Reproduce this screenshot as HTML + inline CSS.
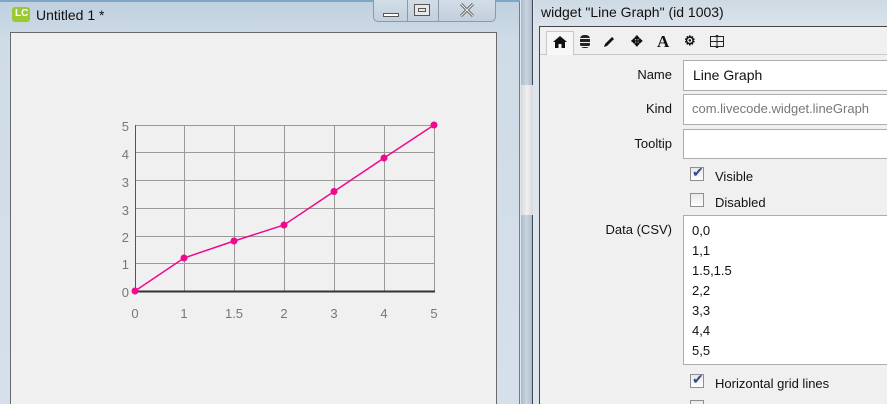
<!DOCTYPE html>
<html><head><meta charset="utf-8"><style>
*{box-sizing:border-box;margin:0;padding:0}
html,body{width:887px;height:404px;overflow:hidden}
body{position:relative;background:#dfe7ee;font-family:"Liberation Sans",sans-serif;font-size:13px;color:#111}
.abs{position:absolute}
.lbl{position:absolute;right:215px;text-align:right;font-size:13px;color:#111}
.box{position:absolute;left:683px;width:210px;background:#fff;border:1px solid #adadad}
.cb{position:absolute;left:690px;width:14px;height:14px;border:1px solid #8f8f8f;background:linear-gradient(#e8e8e8,#fff)}
.cbt{position:absolute;left:715px;font-size:13px}
</style></head><body>
<div class="abs" style="left:0;top:0;width:520px;height:404px;background:linear-gradient(#bfd0df,#cfdbe6 40px,#d6e0ea);border-right:1px solid #6d7d8a"></div>
<div class="abs" style="left:0;top:0;width:520px;height:2px;background:#7fa6c6"></div>
<div class="abs" style="left:12px;top:7px;width:18px;height:15px;background:#9cc92f;border-radius:3px"></div>
<div class="abs" style="left:15px;top:8px;color:#fff;font-size:10px;font-weight:bold">LC</div>
<div class="abs" style="left:36px;top:7px;font-size:14px;color:#111">Untitled 1 *</div>
<div class="abs" style="left:373px;top:0;width:123px;height:22px;border:1px solid #8a9aa8;border-top:none;border-radius:0 0 5px 5px;background:linear-gradient(#d2dde7,#c2d0dc)"></div>
<div class="abs" style="left:407px;top:0;width:1px;height:22px;background:#8a9aa8"></div>
<div class="abs" style="left:438px;top:0;width:1px;height:22px;background:#8a9aa8"></div>
<div class="abs" style="left:383px;top:13px;width:16px;height:4px;border:1px solid #555;background:#fff"></div>
<div class="abs" style="left:414px;top:4px;width:16px;height:12px;border:1px solid #555;background:#e8e8e8"></div>
<div class="abs" style="left:418px;top:8px;width:8px;height:4px;border:1px solid #555"></div>
<svg class="abs" style="left:459px;top:3px" width="16" height="14"><path d="M2 1 L14 13 M14 1 L2 13" stroke="#666" stroke-width="3"/><path d="M2 1 L14 13 M14 1 L2 13" stroke="#eee" stroke-width="1"/></svg>
<div class="abs" style="left:10px;top:32px;width:487px;height:380px;background:#f0f0f0;border:1px solid #6a6a6a"></div>
<svg class="abs" style="left:0;top:0" width="520" height="404">
<g stroke="#9a9a9a" stroke-width="1">
<line x1="135" y1="125.5" x2="434" y2="125.5"/><line x1="135" y1="152.5" x2="434" y2="152.5"/><line x1="135" y1="180.5" x2="434" y2="180.5"/><line x1="135" y1="208.5" x2="434" y2="208.5"/><line x1="135" y1="236.5" x2="434" y2="236.5"/><line x1="135" y1="263.5" x2="434" y2="263.5"/>
<line x1="184.5" y1="125" x2="184.5" y2="291"/><line x1="234.5" y1="125" x2="234.5" y2="291"/><line x1="284.5" y1="125" x2="284.5" y2="291"/><line x1="334.5" y1="125" x2="334.5" y2="291"/><line x1="384.5" y1="125" x2="384.5" y2="291"/><line x1="434.5" y1="125" x2="434.5" y2="291"/>
</g>
<line x1="135.5" y1="125" x2="135.5" y2="292" stroke="#555"/>
<line x1="134" y1="291.5" x2="435" y2="291.5" stroke="#333" stroke-width="2"/>
<polyline fill="none" stroke="#f0088f" stroke-width="1.5" points="135,291 184,258 234,241 284,225 334,191.5 384,158 434,125"/>
<g fill="#f0088f"><circle cx="135" cy="291" r="3.5"/><circle cx="184" cy="258" r="3.5"/><circle cx="234" cy="241" r="3.5"/><circle cx="284" cy="225" r="3.5"/><circle cx="334" cy="191.5" r="3.5"/><circle cx="384" cy="158" r="3.5"/><circle cx="434" cy="125" r="3.5"/></g>
<g font-family="Liberation Sans" font-size="13" fill="#777" text-anchor="end">
<text x="129" y="131">5</text><text x="129" y="159">4</text><text x="129" y="187">3</text><text x="129" y="215">3</text><text x="129" y="242">2</text><text x="129" y="269">1</text><text x="129" y="297">0</text></g>
<g font-family="Liberation Sans" font-size="13" fill="#777" text-anchor="middle">
<text x="135" y="318">0</text><text x="184" y="318">1</text><text x="234" y="318">1.5</text><text x="284" y="318">2</text><text x="334" y="318">3</text><text x="384" y="318">4</text><text x="434" y="318">5</text></g>
</svg>
<div class="abs" style="left:521px;top:0;width:12px;height:404px;background:linear-gradient(90deg,#a9bccb,#c9d6e0,#a9bccb);border-right:1px solid #445"></div>
<div class="abs" style="left:521px;top:85px;width:12px;height:130px;background:linear-gradient(90deg,#d8d8d8,#f0f0f0,#d8d8d8)"></div>
<div class="abs" style="left:534px;top:0;width:353px;height:404px;background:linear-gradient(#cdd9e3,#dde5ec 30px)"></div>
<div class="abs" style="left:541px;top:4px;font-size:14px;color:#111">widget "Line Graph" (id 1003)</div>
<div class="abs" style="left:539px;top:26px;width:360px;height:390px;background:#f0f0f0;border:1px solid #444"></div>
<div class="abs" style="left:540px;top:54px;width:347px;height:1px;background:#c8c8c8"></div>
<div class="abs" style="left:546px;top:31px;width:28px;height:24px;background:#f7f7f7;border:1px solid #c8c8c8;border-bottom:none"></div>
<svg class="abs" style="left:553px;top:36px" width="14" height="12"><path d="M7 0 L14 6 L12 6 L12 12 L8.5 12 L8.5 8 L5.5 8 L5.5 12 L2 12 L2 6 L0 6 Z" fill="#111"/></svg>
<div class="abs" style="left:580px;top:35px;width:10px;height:13px;background:repeating-linear-gradient(#222 0 3px,#f0f0f0 3px 4px);border-radius:4px"></div>
<svg class="abs" style="left:603px;top:36px" width="12" height="12"><path d="M1 11 L2 8 L9 1 L11 3 L4 10 Z" fill="#111"/></svg>
<div class="abs" style="left:631px;top:33px;font-size:14px;font-weight:bold">✥</div>
<div class="abs" style="left:657px;top:32px;font-family:'Liberation Serif';font-size:17px;font-weight:bold">A</div>
<div class="abs" style="left:684px;top:33px;font-size:13px;font-weight:bold">⚙</div>
<svg class="abs" style="left:710px;top:35px" width="15" height="13"><rect x="0.5" y="1.5" width="13" height="10" fill="none" stroke="#222"/><path d="M7 0 V13 M0 6.5 H14 M5 2 L7 0 L9 2 M5 11 L7 13 L9 11" stroke="#222" fill="none"/></svg>
<div class="lbl" style="top:67px">Name</div>
<div class="box" style="top:60px;height:31px;padding:6px 9px;font-size:14px">Line Graph</div>
<div class="lbl" style="top:101px">Kind</div>
<div class="box" style="top:94px;height:31px;padding:6px 8px;font-size:13px;color:#777">com.livecode.widget.lineGraph</div>
<div class="lbl" style="top:136px">Tooltip</div>
<div class="box" style="top:129px;height:30px"></div>
<div class="cb" style="top:167px"></div><div class="abs" style="left:692px;top:164px;color:#334a8c;font-size:14px">✔</div>
<div class="cbt" style="top:169px">Visible</div>
<div class="cb" style="top:193px"></div>
<div class="cbt" style="top:195px">Disabled</div>
<div class="lbl" style="top:222px">Data (CSV)</div>
<div class="box" style="top:215px;height:150px;padding:5px 8px;line-height:20px;font-size:13px">0,0<br>1,1<br>1.5,1.5<br>2,2<br>3,3<br>4,4<br>5,5</div>
<div class="cb" style="top:374px"></div><div class="abs" style="left:692px;top:371px;color:#334a8c;font-size:14px">✔</div>
<div class="cbt" style="top:376px">Horizontal grid lines</div>
<div class="cb" style="top:400px"></div>
</body></html>
